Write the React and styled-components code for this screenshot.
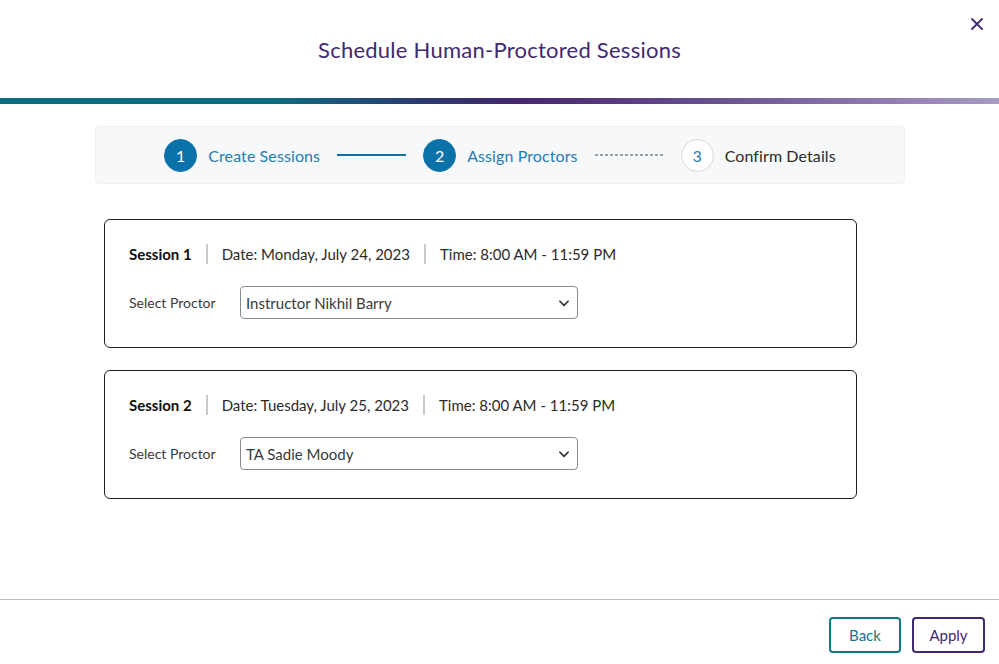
import React from 'react';
import styled, { createGlobalStyle } from 'styled-components';

const Global = createGlobalStyle`
  * { box-sizing: border-box; }
  body {
    margin: 0;
    background: #fff;
    font-family: Lato, "Open Sans", sans-serif;
    color: #333;
  }
`;

const Modal = styled.div`
  width: 999px;
  height: 664px;
  display: flex;
  flex-direction: column;
  background: #fff;
`;

const Header = styled.div`
  position: relative;
  height: 98px;
  display: flex;
  align-items: center;
  justify-content: center;
`;

const Title = styled.h1`
  margin: 0;
  font-size: 22px;
  font-weight: 400;
  color: #42296f;
  letter-spacing: 0.25px;
`;

const Close = styled.button`
  position: absolute;
  right: 12px;
  top: 14px;
  width: 20px;
  height: 20px;
  padding: 0;
  border: none;
  background: none;
  display: flex;
  align-items: center;
  justify-content: center;
  cursor: pointer;
`;

const GradientBar = styled.div`
  height: 6px;
  background: linear-gradient(90deg, #0a6f80 0%, #0b6e80 27%, #2b3a6e 42%, #44266e 52%, #6a528f 72%, #a99ac5 100%);
`;

const Body = styled.div`
  flex: 1;
  padding: 22px 94px 0 95px;
  display: flex;
  flex-direction: column;
`;

const Stepper = styled.div`
  height: 58px;
  background: #f7f8fa;
  border: 1px solid #eef0f3;
  border-radius: 4px;
  display: flex;
  align-items: center;
  justify-content: center;
  gap: 17px;
`;

const Step = styled.div`
  display: flex;
  align-items: center;
  gap: 11px;
`;

const Circle = styled.div`
  width: 33px;
  height: 33px;
  border-radius: 50%;
  display: flex;
  align-items: center;
  justify-content: center;
  font-size: 16px;
  background: ${p => (p.$active ? '#0a72a8' : '#fff')};
  color: ${p => (p.$active ? '#fff' : '#1f7cb3')};
  border: 1px solid ${p => (p.$active ? '#0a72a8' : '#d6d8db')};
`;

const StepLabel = styled.span`
  font-size: 16px;
  letter-spacing: 0.1px;
  color: ${p => (p.$active ? '#1f7cb3' : '#2b2b2b')};
`;

const Connector = styled.div`
  width: 69px;
  height: 2px;
  background: ${p =>
    p.$done
      ? '#0a72a8'
      : 'repeating-linear-gradient(90deg, #9aa0a6 0 3px, transparent 3px 5px)'};
`;

const Cards = styled.div`
  padding: 35px 48px 0 9px;
  display: flex;
  flex-direction: column;
  gap: 22px;
`;

const Card = styled.div`
  height: 129px;
  border: 1px solid #1e1e1e;
  border-radius: 6px;
  padding: 23px 24px 0 24px;
  display: flex;
  flex-direction: column;
  gap: 21px;
`;

const InfoRow = styled.div`
  display: flex;
  align-items: center;
  font-size: 15px;
  color: #2b2b2b;
  height: 22px;
`;

const SessionName = styled.span`
  font-weight: 700;
  color: #111;
`;

const Sep = styled.span`
  width: 2px;
  height: 20px;
  background: #c9c9c9;
  margin: 0 14px;
`;

const ProctorRow = styled.div`
  display: flex;
  align-items: center;
`;

const Label = styled.span`
  width: 111px;
  font-size: 14px;
  color: #3a3a3a;
`;

const Select = styled.div`
  width: 338px;
  height: 33px;
  border: 1px solid #8a8a8a;
  border-radius: 4px;
  padding: 0 6px 0 5px;
  display: flex;
  align-items: center;
  justify-content: space-between;
  font-size: 15px;
  color: #3a3a3a;
`;

const Footer = styled.div`
  height: 65px;
  border-top: 1px solid #bdbdbd;
  display: flex;
  justify-content: flex-end;
  align-items: flex-start;
  padding: 17px 14px 0 0;
  gap: 11px;
`;

const Button = styled.button`
  height: 36px;
  padding: 0;
  width: ${p => p.$w}px;
  background: #fff;
  border: 2px solid ${p => p.$color};
  color: ${p => p.$color};
  border-radius: 4px;
  font-family: inherit;
  font-size: 15px;
  cursor: pointer;
`;

const Chevron = () => (
  <svg width="14" height="14" viewBox="0 0 24 24" fill="none" stroke="#333" strokeWidth="3" strokeLinecap="round" strokeLinejoin="round">
    <path d="M5 9l7 7 7-7" />
  </svg>
);

const sessions = [
  { name: 'Session 1', date: 'Date: Monday, July 24, 2023', time: 'Time: 8:00 AM - 11:59 PM', proctor: 'Instructor Nikhil Barry' },
  { name: 'Session 2', date: 'Date: Tuesday, July 25, 2023', time: 'Time: 8:00 AM - 11:59 PM', proctor: 'TA Sadie Moody' },
];

export default function App() {
  return (
    <Modal>
      <Global />
      <Header>
        <Title>Schedule Human-Proctored Sessions</Title>
        <Close aria-label="Close">
          <svg width="14" height="14" viewBox="0 0 14 14" stroke="#42296f" strokeWidth="1.8" strokeLinecap="round">
            <path d="M2 2l10 10M12 2L2 12" />
          </svg>
        </Close>
      </Header>
      <GradientBar />
      <Body>
        <Stepper>
          <Step>
            <Circle $active>1</Circle>
            <StepLabel $active>Create Sessions</StepLabel>
          </Step>
          <Connector $done />
          <Step>
            <Circle $active>2</Circle>
            <StepLabel $active>Assign Proctors</StepLabel>
          </Step>
          <Connector />
          <Step>
            <Circle>3</Circle>
            <StepLabel>Confirm Details</StepLabel>
          </Step>
        </Stepper>
        <Cards>
          {sessions.map(s => (
            <Card key={s.name}>
              <InfoRow>
                <SessionName>{s.name}</SessionName>
                <Sep />
                <span>{s.date}</span>
                <Sep />
                <span>{s.time}</span>
              </InfoRow>
              <ProctorRow>
                <Label>Select Proctor</Label>
                <Select>
                  <span>{s.proctor}</span>
                  <Chevron />
                </Select>
              </ProctorRow>
            </Card>
          ))}
        </Cards>
      </Body>
      <Footer>
        <Button $w={72} $color="#137687">Back</Button>
        <Button $w={73} $color="#42296f">Apply</Button>
      </Footer>
    </Modal>
  );
}
